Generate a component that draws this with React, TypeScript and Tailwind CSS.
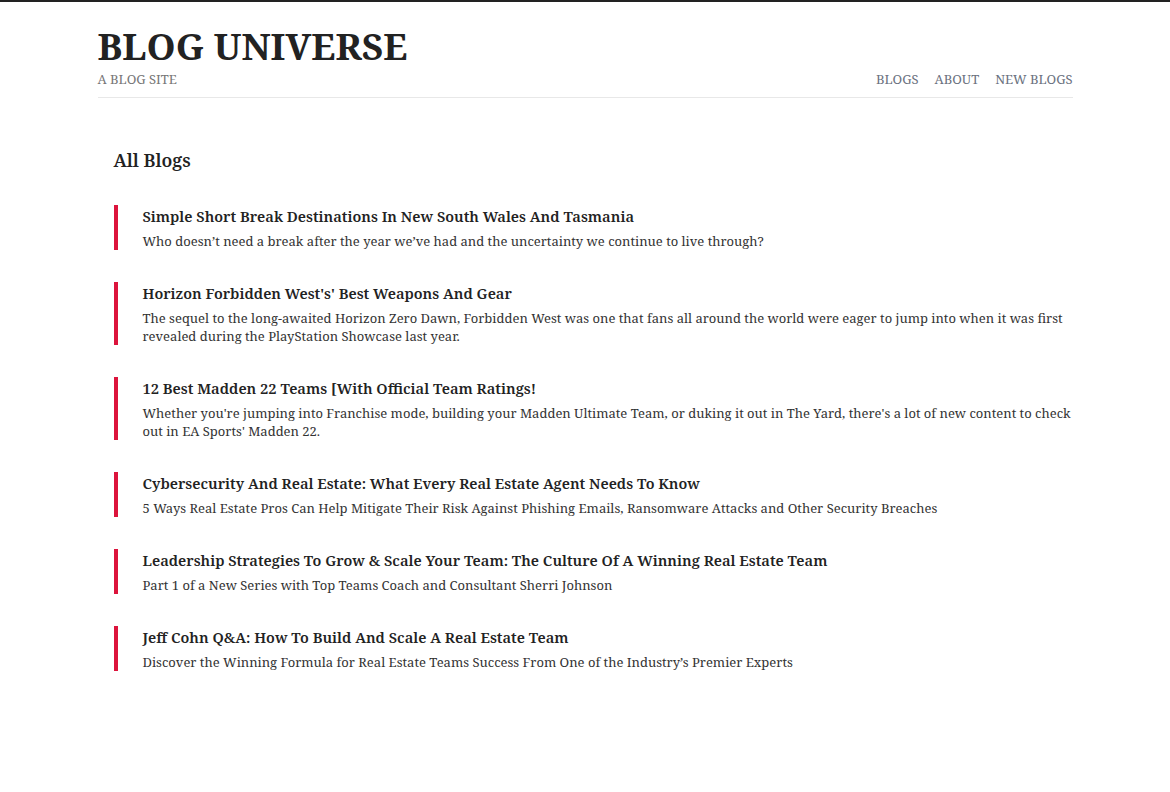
import React from "react";

const blogs = [
  {
    title: "Simple Short Break Destinations In New South Wales And Tasmania",
    desc: "Who doesn’t need a break after the year we’ve had and the uncertainty we continue to live through?",
  },
  {
    title: "Horizon Forbidden West's' Best Weapons And Gear",
    desc: "The sequel to the long-awaited Horizon Zero Dawn, Forbidden West was one that fans all around the world were eager to jump into when it was first revealed during the PlayStation Showcase last year.",
  },
  {
    title: "12 Best Madden 22 Teams [With Official Team Ratings!",
    desc: "Whether you're jumping into Franchise mode, building your Madden Ultimate Team, or duking it out in The Yard, there's a lot of new content to check out in EA Sports' Madden 22.",
  },
  {
    title: "Cybersecurity And Real Estate: What Every Real Estate Agent Needs To Know",
    desc: "5 Ways Real Estate Pros Can Help Mitigate Their Risk Against Phishing Emails, Ransomware Attacks and Other Security Breaches",
  },
  {
    title: "Leadership Strategies To Grow & Scale Your Team: The Culture Of A Winning Real Estate Team",
    desc: "Part 1 of a New Series with Top Teams Coach and Consultant Sherri Johnson",
  },
  {
    title: "Jeff Cohn Q&A: How To Build And Scale A Real Estate Team",
    desc: "Discover the Winning Formula for Real Estate Teams Success From One of the Industry’s Premier Experts",
  },
];

export default function App() {
  return (
    <div
      className="min-h-[792px] bg-white border-t-2 border-[#222] text-[#222]"
      style={{ fontFamily: '"Noto Serif", "DejaVu Serif", "Liberation Serif", serif' }}
    >
      <div className="w-[975px] mx-auto">
        <header className="pt-[20px] border-b border-[#e8e8e8] pb-[10px]">
          <h1 className="text-[37px] leading-[47px] font-bold text-[#222]">BLOG UNIVERSE</h1>
          <div className="flex justify-between items-end mt-[2px]">
            <div className="text-[13px] leading-[16px] text-[#777]">A BLOG SITE</div>
            <nav className="flex gap-[16px] text-[13px] leading-[16px] text-[#6b7280]">
              <span>BLOGS</span>
              <span>ABOUT</span>
              <span>NEW BLOGS</span>
            </nav>
          </div>
        </header>
        <main className="pl-[16px] pt-[49px]">
          <h2 className="text-[18px] leading-[26px] font-semibold mb-[32px]">All Blogs</h2>
          <div className="flex flex-col gap-[32px]">
            {blogs.map((b) => (
              <div key={b.title} className="border-l-4 border-[#dc143c] pl-[25px]">
                <h3 className="text-[14.7px] leading-[23px] font-semibold text-[#222] mb-[4px]">{b.title}</h3>
                <p className="text-[13px] leading-[18px] text-[#333]">{b.desc}</p>
              </div>
            ))}
          </div>
        </main>
      </div>
    </div>
  );
}
